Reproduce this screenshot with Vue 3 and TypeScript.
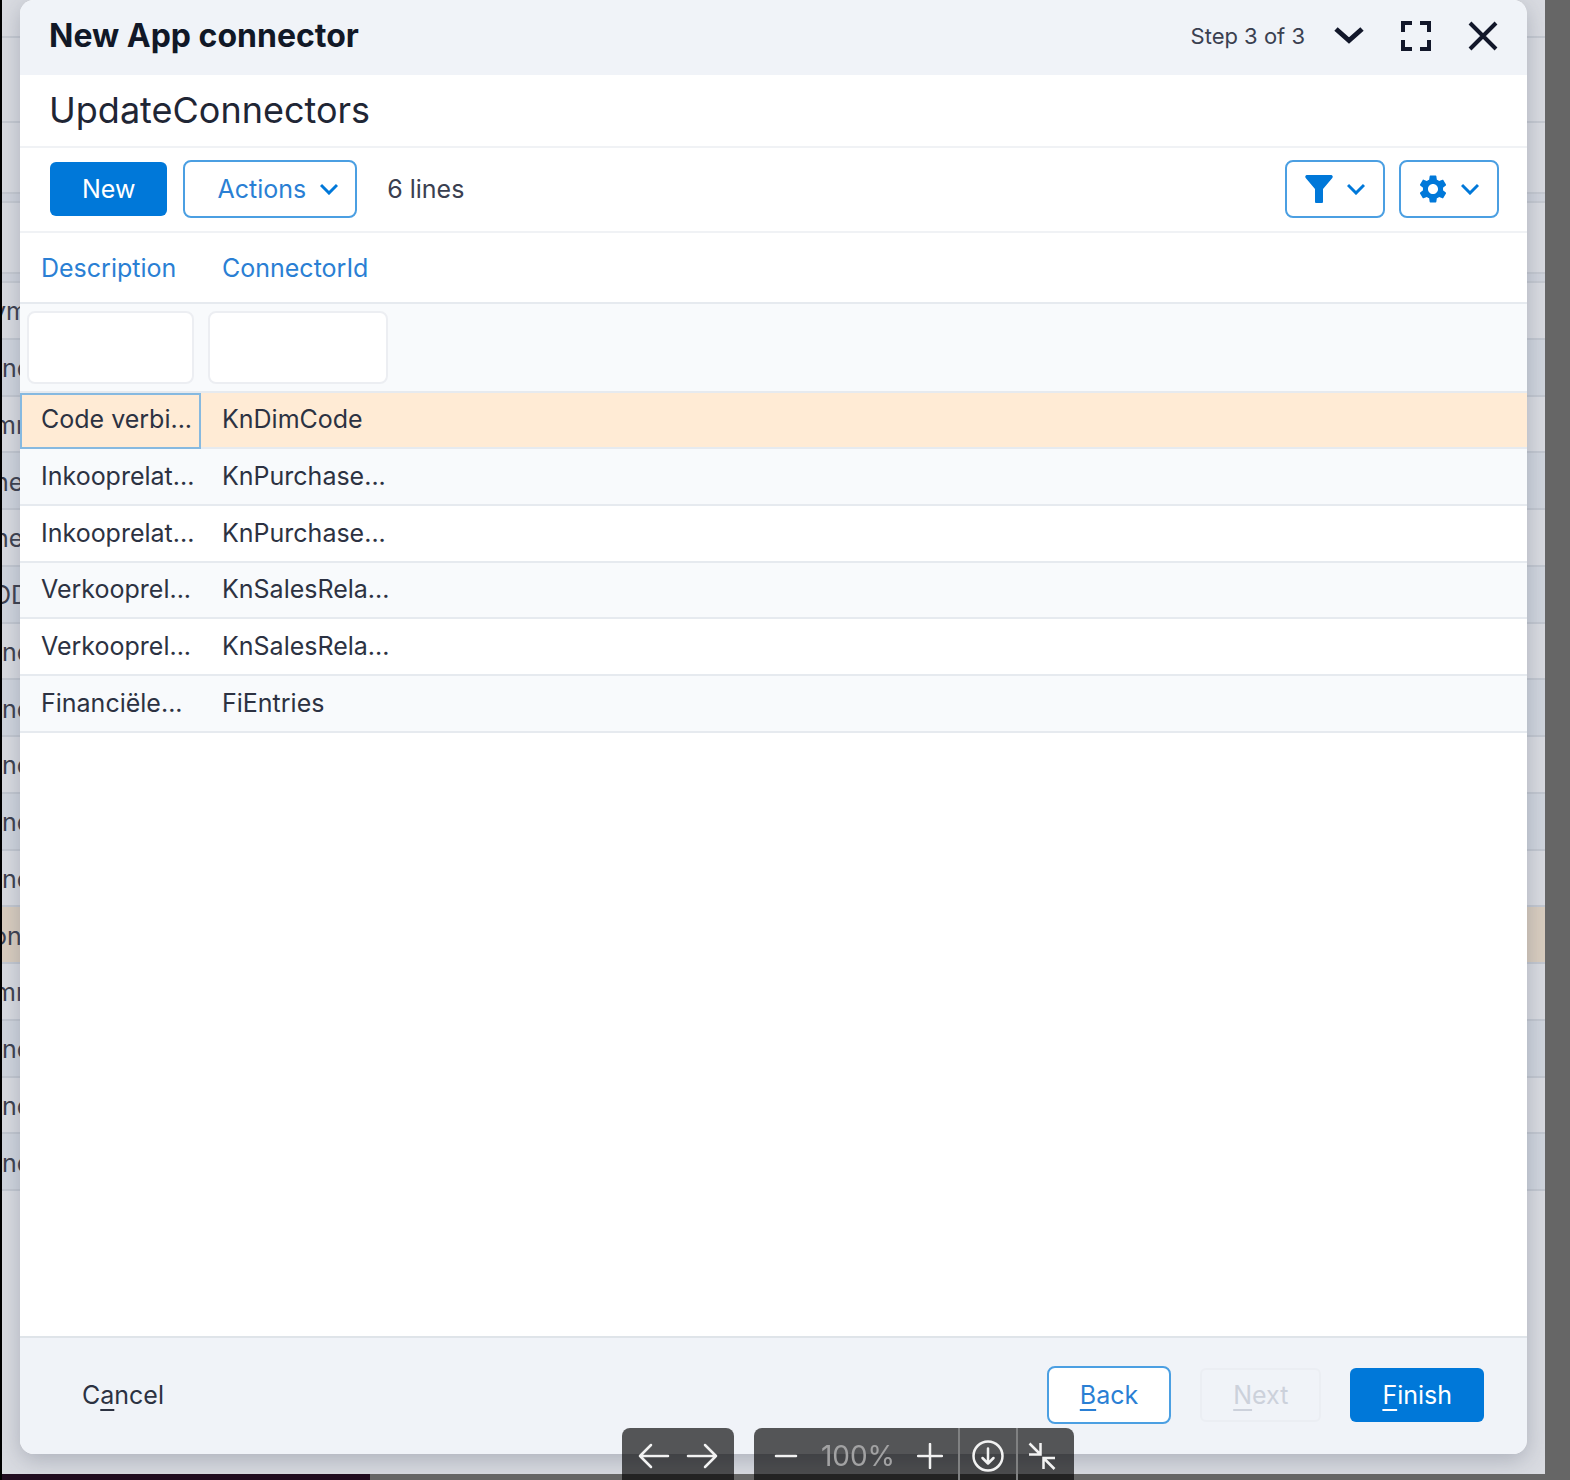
<script setup lang="ts">
import { ref } from 'vue'

interface Connector {
  description: string
  connectorId: string
}

interface PageRow {
  text: string
  cut: 'none' | 'some' | 'more'
  selected?: boolean
}

const connectors: Connector[] = [
  { description: 'Code verbi...', connectorId: 'KnDimCode' },
  { description: 'Inkooprelat...', connectorId: 'KnPurchase...' },
  { description: 'Inkooprelat...', connectorId: 'KnPurchase...' },
  { description: 'Verkooprel...', connectorId: 'KnSalesRela...' },
  { description: 'Verkooprel...', connectorId: 'KnSalesRela...' },
  { description: 'Financiële...', connectorId: 'FiEntries' },
]

const pageRows: PageRow[] = [
  { text: 'ym', cut: 'more' },
  { text: 'nd', cut: 'none' },
  { text: 'mm', cut: 'some' },
  { text: 'ne', cut: 'some' },
  { text: 'ne', cut: 'some' },
  { text: 'OD', cut: 'more' },
  { text: 'nd', cut: 'none' },
  { text: 'nd', cut: 'none' },
  { text: 'nd', cut: 'none' },
  { text: 'nd', cut: 'none' },
  { text: 'nd', cut: 'none' },
  { text: 'on', cut: 'more', selected: true },
  { text: 'mm', cut: 'some' },
  { text: 'nd', cut: 'none' },
  { text: 'nd', cut: 'none' },
  { text: 'nd', cut: 'none' },
]

const selected = ref(0)
const descriptionFilter = ref('')
const idFilter = ref('')
</script>

<template>
  <div class="viewer">
    <div class="stage">
      <div class="page" aria-hidden="true">
        <div class="band band-top"></div>
        <div class="band band-title"></div>
        <div class="band band-tools"></div>
        <div class="band band-gap"></div>
        <div class="band band-head"></div>
        <div class="band band-gap"></div>
        <div class="page-rows">
          <div
            v-for="(row, i) in pageRows"
            :key="i"
            class="page-row"
            :class="['cut-' + row.cut, { picked: row.selected }]"
          >
            <span>{{ row.text }}</span>
          </div>
        </div>
      </div>

      <section class="dialog" role="dialog" aria-labelledby="dialog-title">
        <header class="dialog-head">
          <h1 id="dialog-title">New App connector</h1>
          <div class="head-tools">
            <span class="step">Step 3 of 3</span>
            <button type="button" class="icon-btn" aria-label="Steps">
              <svg width="30" height="30" viewBox="0 0 30 30" fill="none" stroke="currentColor" stroke-width="5">
                <path d="M2 8L15 19.500L28 8" />
              </svg>
            </button>
            <button type="button" class="icon-btn" aria-label="Full screen">
              <svg width="30" height="30" viewBox="0 0 30 30" fill="none" stroke="currentColor" stroke-width="4">
                <path d="M2 11V2H11M19 2H28V11M28 19V28H19M11 28H2V19" />
              </svg>
            </button>
            <button type="button" class="icon-btn" aria-label="Close">
              <svg width="30" height="30" viewBox="0 0 30 30" fill="none" stroke="currentColor" stroke-width="4">
                <path d="M2 2L28 28M28 2L2 28" />
              </svg>
            </button>
          </div>
        </header>

        <h2>UpdateConnectors</h2>

        <div class="toolbar">
          <button type="button" class="btn primary">New</button>
          <button type="button" class="btn outline menu-btn">
            Actions
            <svg width="18" height="12" viewBox="0 0 18 12" fill="none" stroke="currentColor" stroke-width="3">
              <path d="M1 2L9 10L17 2" />
            </svg>
          </button>
          <span class="count">6 lines</span>
          <button type="button" class="btn outline tool-btn" aria-label="Filter">
            <svg width="28" height="28" viewBox="0 0 28 28" fill="currentColor">
              <path d="M1.500 0H26.500Q28.500 .8 27.300 3L18 14V27Q18 28 17 28H11Q10 28 10 27V14L.7 3Q-.5 .8 1.500 0Z" />
            </svg>
            <svg width="18" height="12" viewBox="0 0 18 12" fill="none" stroke="currentColor" stroke-width="3">
              <path d="M1 2L9 10L17 2" />
            </svg>
          </button>
          <button type="button" class="btn outline tool-btn" aria-label="Settings">
            <svg width="28" height="28" viewBox="2 2 20 20" fill="currentColor">
              <path d="M19.140 12.940c.04-.3.06-.61.06-.94 0-.32-.02-.64-.07-.94l2.030-1.580c.18-.14.23-.41.120-.61l-1.920-3.320c-.12-.22-.37-.29-.59-.22l-2.390.96c-.5-.38-1.030-.7-1.620-.94l-.36-2.540c-.04-.24-.24-.41-.48-.41h-3.840c-.24 0-.43.17-.47.41l-.36 2.540c-.59.24-1.130.57-1.620.94l-2.390-.96c-.22-.08-.47 0-.59.22L2.740 8.870c-.12.21-.08.47.120.61l2.030 1.580c-.05.3-.09.63-.09.94s.02.64.07.94l-2.030 1.580c-.18.14-.23.41-.12.61l1.920 3.320c.12.22.37.29.59.22l2.390-.96c.5.38 1.030.7 1.620.94l.36 2.540c.05.24.24.41.48.41h3.840c.24 0 .44-.17.47-.41l.36-2.540c.59-.24 1.130-.56 1.620-.94l2.390.96c.22.08.47 0 .59-.22l1.920-3.320c.12-.22.07-.47-.12-.61l-2.010-1.580zM12 15.600c-1.980 0-3.600-1.620-3.600-3.600s1.620-3.600 3.600-3.600 3.600 1.620 3.600 3.600-1.620 3.600-3.600 3.600z" />
            </svg>
            <svg width="18" height="12" viewBox="0 0 18 12" fill="none" stroke="currentColor" stroke-width="3">
              <path d="M1 2L9 10L17 2" />
            </svg>
          </button>
        </div>

        <div class="grid-area">
          <table>
            <colgroup>
              <col class="col-description" />
              <col class="col-id" />
              <col />
            </colgroup>
            <thead>
              <tr class="titles">
                <th scope="col">Description</th>
                <th scope="col">ConnectorId</th>
                <td></td>
              </tr>
              <tr class="filters">
                <td><input v-model="descriptionFilter" type="text" aria-label="Filter Description" /></td>
                <td><input v-model="idFilter" type="text" aria-label="Filter ConnectorId" /></td>
                <td></td>
              </tr>
            </thead>
            <tbody>
              <tr
                v-for="(item, i) in connectors"
                :key="i"
                :class="{ active: i === selected }"
                @click="selected = i"
              >
                <td>{{ item.description }}</td>
                <td>{{ item.connectorId }}</td>
                <td></td>
              </tr>
            </tbody>
          </table>
        </div>

        <footer class="dialog-foot">
          <button type="button" class="btn plain">C<u>a</u>ncel</button>
          <button type="button" class="btn outline"><u>B</u>ack</button>
          <button type="button" class="btn ghost" disabled><u>N</u>ext</button>
          <button type="button" class="btn primary"><u>F</u>inish</button>
        </footer>
      </section>
    </div>

    <div class="controls">
      <div class="control-group nav">
        <button type="button" aria-label="Previous">
          <svg width="32" height="28" viewBox="0 0 32 28" fill="none" stroke="currentColor" stroke-width="2.500" stroke-linecap="round" stroke-linejoin="round">
            <path d="M30 14H2M13 3L2 14L13 25" />
          </svg>
        </button>
        <button type="button" aria-label="Next image">
          <svg width="32" height="28" viewBox="0 0 32 28" fill="none" stroke="currentColor" stroke-width="2.500" stroke-linecap="round" stroke-linejoin="round">
            <path d="M2 14H30M19 3L30 14L19 25" />
          </svg>
        </button>
      </div>
      <div class="control-group">
        <div class="zoom">
          <button type="button" aria-label="Zoom out">
            <svg width="26" height="26" viewBox="0 0 26 26" stroke="currentColor" stroke-width="2.500" stroke-linecap="round">
              <path d="M3 13H23" />
            </svg>
          </button>
          <span>100%</span>
          <button type="button" aria-label="Zoom in">
            <svg width="26" height="26" viewBox="0 0 26 26" stroke="currentColor" stroke-width="2.500" stroke-linecap="round">
              <path d="M1 13H25M13 1V25" />
            </svg>
          </button>
        </div>
        <button type="button" class="cell" aria-label="Download">
          <svg width="32" height="32" viewBox="0 0 32 32" fill="none" stroke="currentColor" stroke-width="2.500" stroke-linecap="round" stroke-linejoin="round">
            <circle cx="16" cy="16" r="14.500" />
            <path d="M16 8.500V23M10.500 18L16 23.500L21.500 18" />
          </svg>
        </button>
        <button type="button" class="cell fit" aria-label="Actual size">
          <svg width="28" height="28" viewBox="0 0 28 28" fill="none" stroke="currentColor" stroke-width="2.500">
            <path d="M1.500 1.500L12 12M12.500 1V12.500H1M26.500 27L16 16.500M15.500 27V16H27" />
          </svg>
        </button>
      </div>
    </div>
  </div>
</template>

<style>
body {
  margin: 0;
}
</style>

<style scoped>
* {
  box-sizing: border-box;
}

.viewer {
  min-height: 100vh;
  display: flex;
  flex-direction: column;
  background: #666666;
  border-left: 2px solid #000000;
  font-family: Inter, 'Liberation Sans', sans-serif;
  font-size: 25px;
  line-height: 32px;
  color: #2c3242;
}

.viewer::after {
  content: '';
  width: 368px;
  height: 6px;
  background: #210d20;
}

button {
  font: inherit;
  color: inherit;
  background: none;
  border: 0;
  padding: 0;
  margin: 0;
  cursor: pointer;
}

svg {
  display: block;
  flex: none;
}

/* page behind the dialog */
.stage {
  flex: 1;
  display: grid;
  grid-template-columns: minmax(0, 1fr);
  margin-right: 25px;
  background: #d9dbe1;
  overflow: hidden;
}

.page,
.dialog {
  grid-area: 1 / 1;
}

.band {
  border-bottom: 2px solid #c6cad2;
}

.band-top {
  height: 38px;
}

.band-title {
  height: 85px;
}

.band-tools {
  height: 71px;
}

.band-head {
  height: 71px;
}

.band-gap {
  height: 9px;
  background: #d0d4dd;
}

.page-rows {
  height: 908px;
  display: flex;
  flex-direction: column;
}

.page-row {
  flex: 1;
  display: flex;
  align-items: center;
  padding-top: 2px;
  border-bottom: 2px solid #c3c8d1;
  color: #3c404e;
}

.page-row:nth-child(even) {
  background: #d0d5de;
}

.page-row.picked {
  background: #d9cdbf;
}

.cut-some span {
  margin-left: -8px;
}

.cut-more span {
  margin-left: -10px;
}

/* dialog */
.dialog {
  display: flex;
  flex-direction: column;
  margin: 0 18px 20px 18px;
  background: #ffffff;
  border-radius: 14px;
  overflow: hidden;
  box-shadow: 0 6px 22px rgba(70, 80, 100, 0.3);
}

.dialog-head {
  height: 75px;
  display: flex;
  align-items: center;
  justify-content: space-between;
  padding: 0 29px 4px;
  background: #f0f3f8;
}

h1 {
  margin: 0;
  font-size: 32px;
  font-weight: 700;
  color: #111827;
}

.head-tools {
  display: flex;
  align-items: center;
  gap: 37px;
  color: #12172a;
}

.step {
  margin-right: -8px;
  font-size: 22px;
  color: #3a4050;
}

h2 {
  margin: 0;
  height: 73px;
  padding: 0 29px;
  border-bottom: 2px solid #f0f2f5;
  font-size: 36px;
  font-weight: 400;
  line-height: 70px;
  color: #1f2635;
}

.btn {
  height: 54px;
  padding: 0 32px;
  border-radius: 6px;
  white-space: nowrap;
}

.btn u {
  text-decoration-thickness: 2px;
  text-underline-offset: 5px;
  text-decoration-skip-ink: none;
}

.primary {
  background: #0078d9;
  color: #ffffff;
}

.outline {
  height: 58px;
  padding: 0 31px;
  border: 2px solid #4b9fe2;
  border-radius: 8px;
  background: #ffffff;
  color: #2a7fd4;
}

.toolbar {
  height: 85px;
  display: flex;
  align-items: center;
  padding: 0 28px 2px 30px;
  border-bottom: 2px solid #f0f2f5;
}

.toolbar svg {
  color: #0078d9;
}

.menu-btn {
  display: flex;
  align-items: center;
  gap: 14px;
  margin: 0 30px 0 16px;
  padding: 0 17px 0 32px;
}

.count {
  margin-right: auto;
  color: #3a4050;
}

.tool-btn {
  display: flex;
  align-items: center;
  gap: 14px;
  padding: 0 18px;
  margin-left: 14px;
}

/* table */
.grid-area {
  flex: 1;
}

table {
  width: 100%;
  table-layout: fixed;
  border-collapse: separate;
  border-spacing: 0;
}

.col-description {
  width: 181px;
}

.col-id {
  width: 194px;
}

th,
td {
  padding: 0 0 2px 21px;
  text-align: left;
  font-weight: 400;
  white-space: nowrap;
  border-bottom: 2px solid #e6eaef;
}

.titles th,
.titles td {
  height: 71px;
  padding-bottom: 0;
  color: #2a7fd4;
}

.filters td {
  height: 89px;
  padding: 0 7px;
  background: #f8fafc;
}

input {
  display: block;
  width: 100%;
  height: 73px;
  padding: 0 12px;
  border: 2px solid #eceef2;
  border-radius: 8px;
  background: #ffffff;
  font: inherit;
  color: inherit;
}

tbody td {
  height: 57px;
}

tbody tr:nth-child(3n + 1) td {
  height: 56px;
}

tbody tr:nth-child(even) td {
  background: #f8fafc;
}

tbody tr.active td {
  background: #ffebd5;
}

tbody tr.active td:first-child {
  outline: 2px solid #86b9e0;
  outline-offset: -2px;
}

/* footer */
.dialog-foot {
  height: 118px;
  display: flex;
  align-items: center;
  padding: 0 43px 2px 30px;
  gap: 29px;
  border-top: 2px solid #dfe4e9;
  background: #f0f3f8;
}

.plain {
  margin-right: auto;
}

.ghost {
  border: 2px solid #ebeef3;
  padding: 0 31px;
  color: #ccd1db;
  cursor: default;
}

/* viewer controls */
.controls {
  position: fixed;
  left: 0;
  right: 0;
  bottom: 0;
  height: 52px;
  display: flex;
  justify-content: center;
  gap: 20px;
  padding-left: 126px;
  color: #f2f2f2;
}

.control-group {
  display: flex;
  align-items: stretch;
  border-radius: 8px 8px 0 0;
  background: rgba(0, 0, 0, 0.65);
}

.nav {
  align-items: center;
  gap: 16px;
  padding: 4px 16px 0;
}

.zoom {
  display: flex;
  align-items: center;
  gap: 22px;
  padding: 4px 15px 0 19px;
  font-size: 28px;
  color: #a2a2a3;
}

.zoom button {
  color: #f2f2f2;
}

.cell {
  width: 58px;
  display: flex;
  align-items: center;
  justify-content: center;
  padding-top: 4px;
  border-left: 2px solid #808182;
}

.fit {
  justify-content: flex-start;
  padding-left: 10px;
}
</style>
